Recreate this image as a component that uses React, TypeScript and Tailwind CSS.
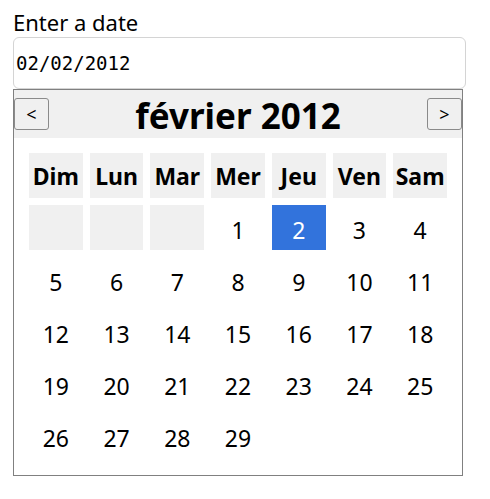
import React from "react";

const days = ["Dim", "Lun", "Mar", "Mer", "Jeu", "Ven", "Sam"];

export default function App() {
  const cells: (number | null)[] = [null, null, null];
  for (let i = 1; i <= 29; i++) cells.push(i);
  return (
    <div
      className="pl-[13px] pt-[7px] text-black bg-white min-h-screen"
      style={{ fontFamily: '"Noto Sans", "Open Sans", sans-serif' }}
    >
      <div className="h-[30px] text-[22px] leading-[30px]">Enter a date</div>
      <div
        className="w-[453px] h-[52px] border border-[#d4d4d4] rounded-[6px] flex items-center pl-[2px] text-[19px]"
        style={{ fontFamily: '"DejaVu Sans Mono", "Liberation Mono", monospace' }}
      >
        02/02/2012
      </div>
      <div className="w-[450px] border border-[#808080]">
        <div className="bg-[#f0f0f0] h-[48px] flex items-center justify-between">
          <button className="w-[35px] h-[32px] border border-[#8a8a8a] rounded-[3px] bg-[#f0f0f0] text-[18px] leading-none flex items-center justify-center">
            &lt;
          </button>
          <div className="text-[35px] font-bold leading-none pt-[3px]">février 2012</div>
          <button className="w-[35px] h-[32px] border border-[#8a8a8a] rounded-[3px] bg-[#f0f0f0] text-[18px] leading-none flex items-center justify-center">
            &gt;
          </button>
        </div>
        <div className="px-[15px] pt-[15px] pb-[17px]">
          <div className="grid grid-cols-7 gap-[7px] auto-rows-[45px]">
            {days.map((d) => (
              <div key={d} className="bg-[#f0f0f0] flex items-center justify-center pt-[2px] text-[23px] font-bold">
                {d}
              </div>
            ))}
            {cells.map((c, i) =>
              c === null ? (
                <div key={"e" + i} className="bg-[#f0f0f0]" />
              ) : (
                <div
                  key={i}
                  className={
                    "flex items-center justify-center pt-[6px] text-[23px] " +
                    (c === 2 ? "bg-[#3273dc] text-white" : "")
                  }
                >
                  {c}
                </div>
              )
            )}
          </div>
        </div>
      </div>
    </div>
  );
}
